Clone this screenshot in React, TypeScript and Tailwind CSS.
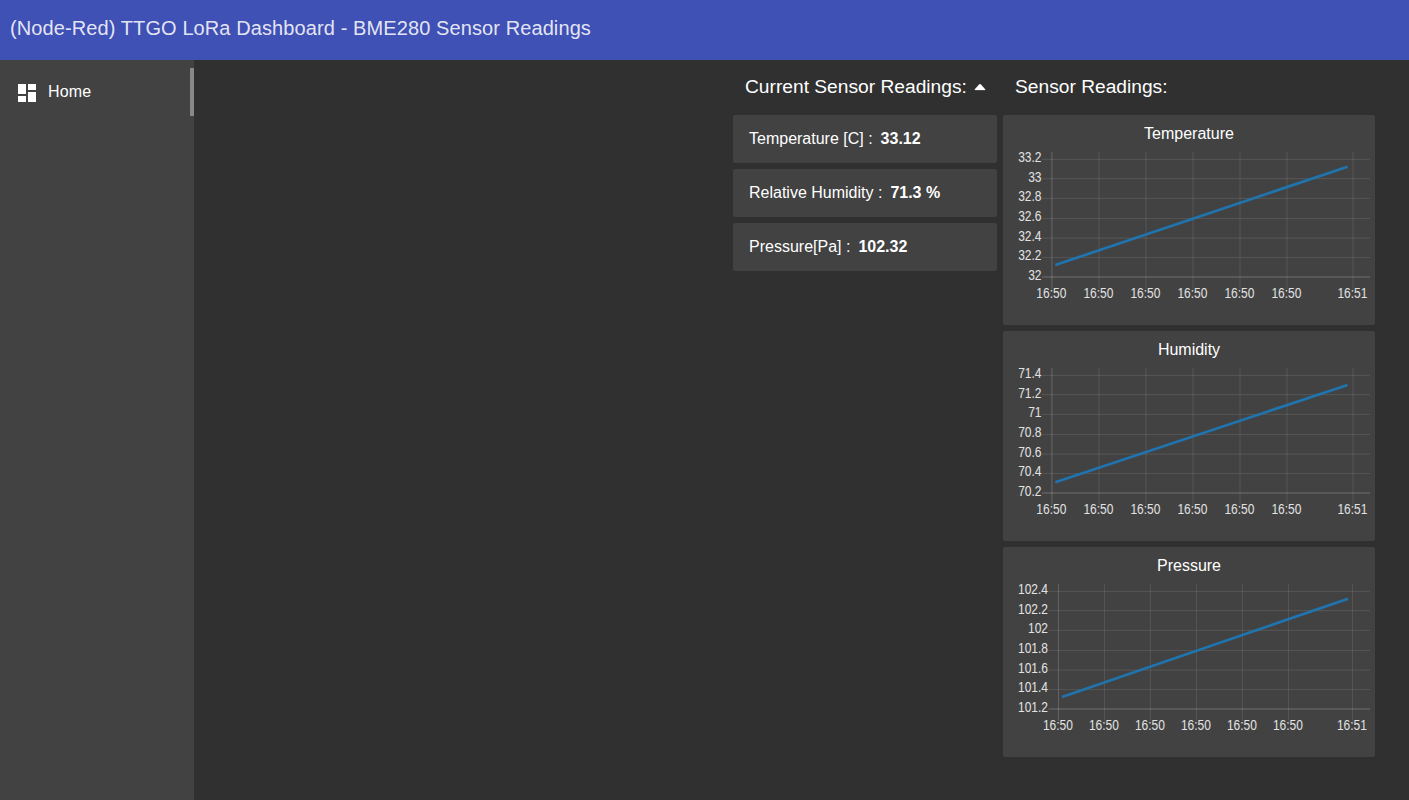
import React from "react";

type ChartProps = {
  title: string;
  yLabels: string[];
  xs: number[];
  left: number;
  strokeWidth: number;
  line: [number, number, number, number];
};

const ROWS = [8.3, 27.7, 47.3, 67.5, 87.2, 106.5, 126];
const LABEL_BASELINES = [11.4, 30.7, 50.2, 70.4, 89.9, 109.2, 128.7];

function Chart({ title, yLabels, xs, left, strokeWidth, line }: ChartProps) {
  return (
    <section className="h-[210px] w-[372px] rounded-[2px] bg-[#424242]">
      <h3 className="h-9 text-center text-base leading-[37px] text-white">{title}</h3>
      <svg className="block h-[174px] w-[372px] overflow-visible" viewBox="0 0 372 174">
        {ROWS.map((y, i) => (
          <line key={y} x1={left} x2="367" y1={y} y2={y} stroke="#fff" strokeOpacity={i === 6 ? 0.16 : 0.09} strokeWidth={i === 6 ? 1.4 : 1.2} />
        ))}
        {xs.map((x, i) => (
          <line key={x} x1={x} x2={x} y1="1" y2="138" stroke="#fff" strokeOpacity={i === 0 ? 0.17 : 0.09} strokeWidth={strokeWidth} />
        ))}
        <line x1={line[0]} y1={line[1]} x2={line[2]} y2={line[3]} stroke="#1f77b4" strokeOpacity="0.95" strokeWidth="2.7" />
        {yLabels.map((label, i) => (
          <text key={label} transform={`translate(${left - 0.5} ${LABEL_BASELINES[i]}) scale(1 1.25)`} textAnchor="end" fontSize="12" fill="#e2e2e2">
            {label}
          </text>
        ))}
        {xs.map((x, i) => (
          <text key={x} transform={`translate(${x - 0.6} 147.3) scale(1 1.25)`} textAnchor="middle" fontSize="12" fill="#e2e2e2">
            {i === 6 ? "16:51" : "16:50"}
          </text>
        ))}
      </svg>
    </section>
  );
}

const WIDE = [48.9, 96, 143, 190, 237, 284, 350];
const NARROW = [55.5, 101.5, 147.5, 193.5, 239.5, 285.5, 349.5];

const charts: ChartProps[] = [
  { title: "Temperature", yLabels: ["33.2", "33", "32.8", "32.6", "32.4", "32.2", "32"], xs: WIDE, left: 39, strokeWidth: 1.2, line: [52.3, 114, 344.5, 15.7] },
  { title: "Humidity", yLabels: ["71.4", "71.2", "71", "70.8", "70.6", "70.4", "70.2"], xs: WIDE, left: 39, strokeWidth: 1.2, line: [52.3, 115.2, 344.5, 18] },
  { title: "Pressure", yLabels: ["102.4", "102.2", "102", "101.8", "101.6", "101.4", "101.2"], xs: NARROW, left: 45.5, strokeWidth: 1, line: [59, 114, 345, 15.7] },
];

const readings = [
  { label: "Temperature [C] :", value: "33.12" },
  { label: "Relative Humidity :", value: "71.3 %" },
  { label: "Pressure[Pa] :", value: "102.32" },
];

export default function App() {
  return (
    <div className="flex h-[800px] w-full flex-col overflow-hidden bg-[#303030] font-['Liberation_Sans',Arial,sans-serif] text-white">
      <header className="h-[60px] shrink-0 bg-[#3f51b5] px-[10px]">
        <h1 className="text-[20px] leading-[56px] tracking-[0.1px] text-white/87">(Node-Red) TTGO LoRa Dashboard - BME280 Sensor Readings</h1>
      </header>
      <div className="flex min-h-0 flex-1">
        <nav className="w-[194px] shrink-0 bg-[#424242] pt-2">
          <a className="flex h-12 items-center border-r-4 border-[#888] pl-[15px]">
            <svg className="mt-[2px] h-6 w-6" viewBox="0 0 24 24" fill="#fff">
              <path d="M3 3h8v10H3zM13 3h8v6h-8zM3 15h8v6H3zM13 11h8v10h-8z" />
            </svg>
            <span className="ml-[9px] text-base leading-[46px] tracking-[0.16px]">Home</span>
          </a>
        </nav>
        <main className="flex flex-1 justify-end gap-[6px] pr-[34px]">
          <div className="w-[264px]">
            <h2 className="flex h-[55px] items-center pl-3 text-[19.2px]">
              <span className="whitespace-nowrap">Current Sensor Readings:</span>
              <svg className="ml-[7px] h-[7px] w-[12px] -translate-y-[0.5px]" viewBox="0 0 12 7">
                <path d="M.8 5.7 5 1Q6 0 7 1L11.2 5.7Q11.7 6.7 10.7 6.7H1.3Q.3 6.7 .8 5.7Z" fill="#fff" />
              </svg>
            </h2>
            <div className="flex flex-col gap-[6px]">
              {readings.map((r) => (
                <div key={r.label} className="flex h-12 items-center gap-2 rounded-[2px] bg-[#424242] px-4 text-base">
                  <span>{r.label}</span>
                  <b>{r.value}</b>
                </div>
              ))}
            </div>
          </div>
          <div className="w-[372px]">
            <h2 className="flex h-[55px] items-center pl-3 text-[19.2px]">Sensor Readings:</h2>
            <div className="flex flex-col gap-[6px]">
              {charts.map((c) => (
                <Chart key={c.title} {...c} />
              ))}
            </div>
          </div>
        </main>
      </div>
    </div>
  );
}
